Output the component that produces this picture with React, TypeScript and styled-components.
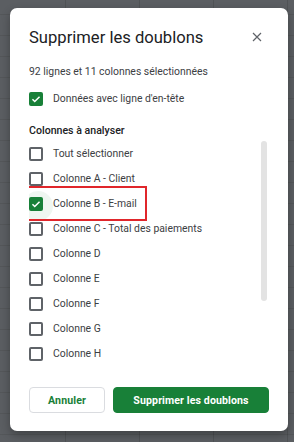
import * as React from 'react'
import styled, { createGlobalStyle } from 'styled-components'

const GlobalStyle = createGlobalStyle`
  html, body {
    margin: 0;
    padding: 0;
    height: 100%;
  }
  body {
    background-color: #5b5e62;
    background-image:
      linear-gradient(to right, rgba(0, 0, 0, 0.12) 1px, transparent 1px),
      linear-gradient(to bottom, rgba(0, 0, 0, 0.08) 1px, transparent 1px);
    background-size: 74px 100%, 100% 21px;
    background-position: 65px 0, 0 14px;
    font-family: Roboto, 'Noto Sans', sans-serif;
    overflow: hidden;
  }
`

const Page = styled.div`
  width: 294px;
  height: 442px;
  padding: 8px 0 0 10px;
  box-sizing: border-box;
`

const Dialog = styled.div`
  width: 278px;
  height: 423px;
  box-sizing: border-box;
  background: #fff;
  border-radius: 7px;
  box-shadow: 0 4px 10px rgba(0, 0, 0, 0.3);
  padding: 15px 19px 0;
  display: flex;
  flex-direction: column;
`

const Header = styled.div`
  height: 28px;
  display: flex;
  align-items: center;
  justify-content: space-between;
`

const Title = styled.h1`
  margin: 0;
  font-family: Roboto, 'Open Sans', sans-serif;
  font-weight: 400;
  font-size: 16.6px;
  color: #202124;
`

const CloseButton = styled.button`
  border: 0;
  background: none;
  padding: 0;
  margin-right: 5px;
  width: 14px;
  height: 14px;
  display: flex;
  align-items: center;
  justify-content: center;
  cursor: pointer;
`

const Subtitle = styled.div`
  margin-top: 11px;
  line-height: 20px;
  font-size: 10.4px;
  color: #3c4043;
`

const SectionLabel = styled.div`
  margin-top: 10px;
  line-height: 20px;
  font-size: 10.6px;
  font-weight: 500;
  color: #202124;
`

const Row = styled.label<{ $first?: boolean }>`
  position: relative;
  display: flex;
  align-items: center;
  height: 25px;
  margin-top: ${p => (p.$first ? '4px' : '0')};
  font-size: 10.4px;
  color: #3c4043;
`

const Box = styled.span<{ $checked?: boolean }>`
  position: relative;
  flex: none;
  width: 14px;
  height: 14px;
  box-sizing: border-box;
  border-radius: 2px;
  border: 2px solid ${p => (p.$checked ? '#188038' : '#5f6368')};
  background: ${p => (p.$checked ? '#188038' : '#fff')};
  margin-right: 10px;
  display: flex;
  align-items: center;
  justify-content: center;
`

const Halo = styled.span`
  position: absolute;
  left: -8px;
  top: -8px;
  width: 30px;
  height: 30px;
  border-radius: 50%;
  background: rgba(24, 128, 56, 0.07);
  z-index: -1;
`

const Highlight = styled.span`
  position: absolute;
  left: -9px;
  top: -5px;
  width: 127px;
  height: 35px;
  box-sizing: border-box;
  border: 2px solid #e0262b;
  pointer-events: none;
`

const ListArea = styled.div`
  display: flex;
  height: 226px;
`

const List = styled.div`
  flex: 1;
  overflow: hidden;
  isolation: isolate;
`

const ScrollTrack = styled.div`
  width: 6px;
  margin-right: 2px;
`

const ScrollThumb = styled.div`
  height: 160px;
  border-radius: 3px;
  background: #e3e3e3;
`

const Footer = styled.div`
  margin-top: 20px;
  display: flex;
  gap: 8px;
`

const Button = styled.button<{ $primary?: boolean }>`
  height: 26px;
  box-sizing: border-box;
  border-radius: 4px;
  font-family: Roboto, sans-serif;
  font-size: 10.6px;
  font-weight: 700;
  letter-spacing: 0.1px;
  padding: 0;
  cursor: pointer;
  border: 1px solid ${p => (p.$primary ? '#188038' : '#dadce0')};
  background: ${p => (p.$primary ? '#188038' : '#fff')};
  color: ${p => (p.$primary ? '#fff' : '#188038')};
  width: ${p => (p.$primary ? '156px' : '76px')};
`

const Check = () => (
  <svg width="10" height="10" viewBox="0 0 24 24">
    <path d="M3.5 12.5l5.5 5.5L20.5 6.5" fill="none" stroke="#fff" strokeWidth="3.6" />
  </svg>
)

const CloseIcon = () => (
  <svg width="10" height="10" viewBox="0 0 10 10">
    <path d="M1 1l8 8M9 1l-8 8" stroke="#5f6368" strokeWidth="1.2" />
  </svg>
)

interface ICheckRowProps {
  label: string
  checked?: boolean
  highlight?: boolean
  first?: boolean
}

const CheckRow: React.FC<ICheckRowProps> = props => (
  <Row $first={props.first}>
    <Box $checked={props.checked}>
      {props.highlight && <Halo />}
      {props.checked && <Check />}
    </Box>
    {props.label}
    {props.highlight && <Highlight />}
  </Row>
)

const columns = [
  { label: 'Tout sélectionner' },
  { label: 'Colonne A - Client' },
  { label: 'Colonne B - E-mail', checked: true, highlight: true },
  { label: 'Colonne C - Total des paiements' },
  { label: 'Colonne D' },
  { label: 'Colonne E' },
  { label: 'Colonne F' },
  { label: 'Colonne G' },
  { label: 'Colonne H' },
]

const App: React.FC = () => (
  <Page>
    <GlobalStyle />
    <Dialog>
      <Header>
        <Title>Supprimer les doublons</Title>
        <CloseButton aria-label="Fermer">
          <CloseIcon />
        </CloseButton>
      </Header>
      <Subtitle>92 lignes et 11 colonnes sélectionnées</Subtitle>
      <CheckRow first checked label="Données avec ligne d'en-tête" />
      <SectionLabel>Colonnes à analyser</SectionLabel>
      <ListArea>
        <List>
          {columns.map(c => (
            <CheckRow key={c.label} {...c} />
          ))}
        </List>
        <ScrollTrack>
          <ScrollThumb />
        </ScrollTrack>
      </ListArea>
      <Footer>
        <Button>Annuler</Button>
        <Button $primary>Supprimer les doublons</Button>
      </Footer>
    </Dialog>
  </Page>
)

export default App
